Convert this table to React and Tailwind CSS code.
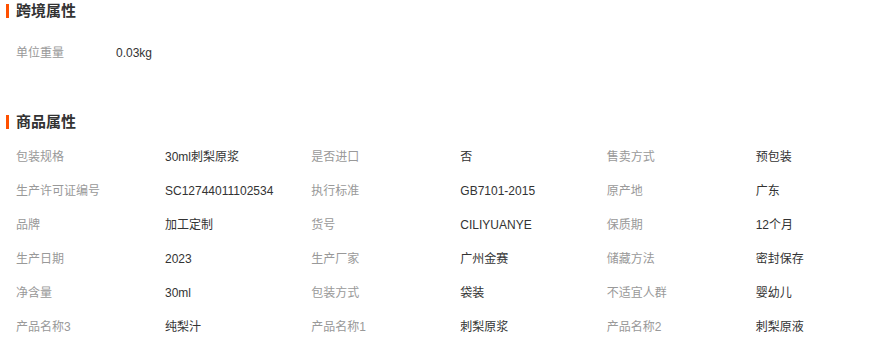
import React from 'react';

const font = { fontFamily: '"Liberation Sans", "Noto Sans CJK SC", sans-serif' };

const crossBorder = [{ label: '单位重量', value: '0.03kg' }];

const attrs = [
    { label: '包装规格', value: '30ml刺梨原浆' },
    { label: '是否进口', value: '否' },
    { label: '售卖方式', value: '预包装' },
    { label: '生产许可证编号', value: 'SC12744011102534' },
    { label: '执行标准', value: 'GB7101-2015' },
    { label: '原产地', value: '广东' },
    { label: '品牌', value: '加工定制' },
    { label: '货号', value: 'CILIYUANYE' },
    { label: '保质期', value: '12个月' },
    { label: '生产日期', value: '2023' },
    { label: '生产厂家', value: '广州金赛' },
    { label: '储藏方法', value: '密封保存' },
    { label: '净含量', value: '30ml' },
    { label: '包装方式', value: '袋装' },
    { label: '不适宜人群', value: '婴幼儿' },
    { label: '产品名称3', value: '纯梨汁' },
    { label: '产品名称1', value: '刺梨原浆' },
    { label: '产品名称2', value: '刺梨原液' },
];

function SectionTitle({ children }) {
    return (
        <div className="flex items-center h-[22px] pl-[6px]">
            <span className="w-[3px] h-[14px] bg-[#ff5000]" />
            <span className="ml-[7px] text-[15px] font-bold text-[#333]">{children}</span>
        </div>
    );
}

export default function App() {
    return (
        <div className="w-[886px] h-[344px] bg-white overflow-hidden text-[12px]" style={font}>
            {/* 跨境属性 */}
            <SectionTitle>跨境属性</SectionTitle>
            <div className="mt-[14px]">
                {crossBorder.map((item) => (
                    <div key={item.label} className="flex items-center h-[34px] pl-4">
                        <span className="w-[100px] text-[#999]">{item.label}</span>
                        <span className="text-[#333]">{item.value}</span>
                    </div>
                ))}
            </div>

            {/* 商品属性 */}
            <div className="mt-[41px]">
                <SectionTitle>商品属性</SectionTitle>
            </div>
            <div className="grid grid-cols-3 mt-[7px]">
                {attrs.map((item) => (
                    <div key={item.label} className="flex items-center h-[34px] pl-4">
                        <span className="w-[149px] text-[#999]">{item.label}</span>
                        <span className="text-[#333]">{item.value}</span>
                    </div>
                ))}
            </div>
        </div>
    );
}
